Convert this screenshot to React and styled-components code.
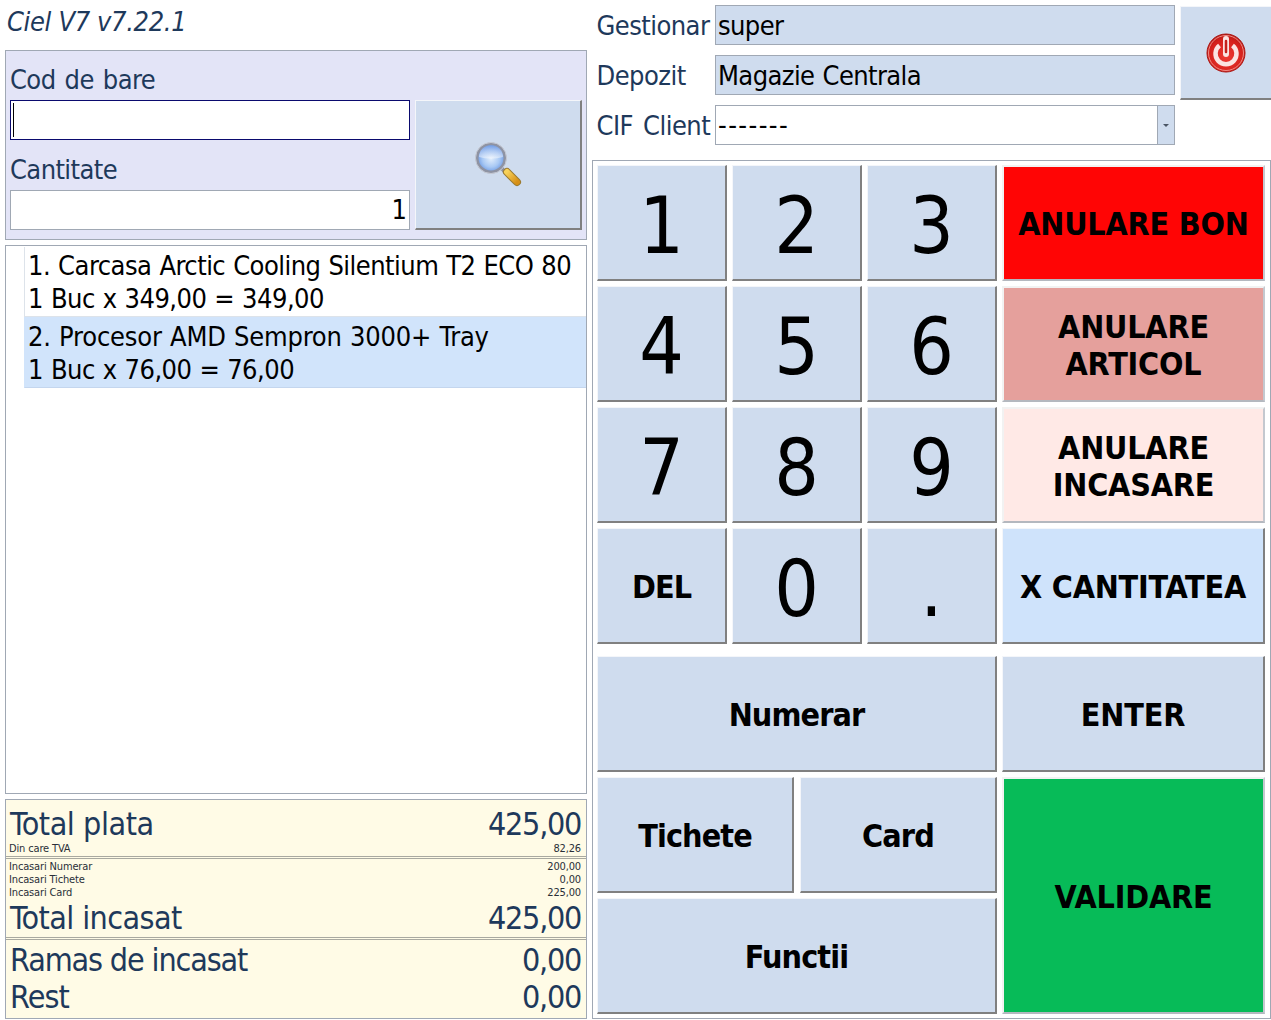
import React from "react";
import styled, { createGlobalStyle, css } from "styled-components";

const Global = createGlobalStyle`
  html, body { margin: 0; padding: 0; background: #fff; }
  body { font-family: "DejaVu Sans", "Liberation Sans", sans-serif; font-stretch: condensed; color: #000; }
`;

const ink = "#1e395b";
const line = "#a0a8b4";

const Page = styled.div`
  width: 1271px;
  height: 1020px;
  overflow: hidden;
  display: grid;
  grid-template-columns: 582px 679px;
  column-gap: 5px;
  padding-left: 5px;
  box-sizing: border-box;
`;
const LeftCol = styled.div`display: flex; flex-direction: column;`;
const RightCol = styled.div`display: flex; flex-direction: column;`;

const Title = styled.div`
  height: 50px;
  box-sizing: border-box;
  padding: 5px 0 0 2px;
  font-size: 27px;
  line-height: 34px;
  font-style: italic;
  color: ${ink};
  letter-spacing: -0.35px;
`;
const ScanPanel = styled.div`
  height: 190px;
  box-sizing: border-box;
  border: 1px solid ${line};
  background: #e3e4f7;
  padding: 10px 4px 9px 4px;
  display: grid;
  grid-template-columns: 400px 167px;
  column-gap: 5px;
`;
const ScanFields = styled.div`display: flex; flex-direction: column;`;
const FieldLabel = styled.div`
  height: 39px;
  font-size: 27px;
  line-height: 38px;
  color: ${ink};
  letter-spacing: -0.6px;
  word-spacing: 2px;
  white-space: nowrap;
`;
const Input = styled.div`
  height: 40px;
  box-sizing: border-box;
  background: #fff;
  border: 1px solid ${p => (p.$focus ? "#0a0a6e" : line)};
  font-size: 27px;
  line-height: 40px;
  padding-right: 2px;
  display: flex;
  align-items: center;
  justify-content: ${p => (p.$focus ? "flex-start" : "flex-end")};
`;
const Caret = styled.span`width: 1px; height: 34px; background: #000; margin-left: 2px;`;
const Spacer = styled.div`height: 11px;`;

const bevel = css`
  box-sizing: border-box;
  background: #cfdcee;
  border-style: solid;
  border-width: 1px 2px 2px 1px;
  border-color: #f4f6fa #808080 #808080 #f4f6fa;
`;
const IconButton = styled.div`
  ${bevel}
  display: flex;
  align-items: center;
  justify-content: center;
`;
const SearchButton = styled(IconButton)`
  height: 130px;
  margin-top: 39px;
`;

const List = styled.div`
  margin-top: 5px;
  height: 549px;
  box-sizing: border-box;
  border: 1px solid ${line};
  padding: 1px 0 0 18px;
  display: flex;
  flex-direction: column;
`;
const Item = styled.div`
  box-sizing: border-box;
  height: ${p => (p.$selected ? 71 : 70)}px;
  padding: ${p => (p.$selected ? 3 : 2)}px 0 0 3px;
  font-size: 27px;
  line-height: 33px;
  letter-spacing: -0.53px;
  word-spacing: 0.8px;
  white-space: nowrap;
  border-left: 1px solid ${p => (p.$selected ? "#d1e4fb" : "#dde3ea")};
  background: ${p => (p.$selected ? "#d1e4fb" : "#fff")};
  border-bottom: 1px solid ${p => (p.$selected ? "#c4d6ee" : "#dde3ea")};
`;
const WideLine = styled.span`letter-spacing: -0.2px;`;

const Totals = styled.div`
  margin-top: 5px;
  height: 220px;
  box-sizing: border-box;
  border: 1px solid ${line};
  background: #fffbe6;
  display: flex;
  flex-direction: column;
  color: ${ink};
`;
const Section = styled.div`
  box-sizing: border-box;
  height: ${p => p.$h}px;
  padding: ${p => p.$pad || "0"} 5px 0 4px;
  border-bottom: ${p => (p.$last ? "none" : "3px double #a9a9a0")};
`;
const BigRow = styled.div`
  display: flex;
  justify-content: space-between;
  font-size: 32px;
  line-height: ${p => p.$lh || 37}px;
  height: ${p => p.$lh || 37}px;
  white-space: nowrap;
`;
const BigLabel = styled.span`letter-spacing: ${p => p.$ls}px;`;
const BigValue = styled.span`letter-spacing: -1.3px;`;
const SmallRow = styled.div`
  display: flex;
  justify-content: space-between;
  margin-left: -1px;
  font-size: 11px;
  line-height: 13px;
  height: 13px;
  letter-spacing: -0.15px;
  color: #2a2f38;
`;

const TopArea = styled.div`
  height: 160px;
  box-sizing: border-box;
  padding: 5px 0 0 5px;
  display: grid;
  grid-template-columns: 578px 91px;
  column-gap: 5px;
  align-items: start;
`;
const InfoRow = styled.div`
  display: grid;
  grid-template-columns: 118px 460px;
  align-items: center;
  height: 40px;
  margin-bottom: 10px;
`;
const InfoLabel = styled.div`
  height: 40px;
  margin-left: -0.5px;
  font-size: 27px;
  line-height: 42px;
  color: ${ink};
  letter-spacing: -0.55px;
  word-spacing: 3px;
  white-space: nowrap;
`;
const ReadOnly = styled.div`
  height: 40px;
  box-sizing: border-box;
  background: #cfdcee;
  border: 1px solid ${line};
  padding-left: 2px;
  font-size: 27px;
  line-height: 40px;
  letter-spacing: -0.6px;
  word-spacing: 1px;
`;
const Combo = styled.div`
  height: 40px;
  box-sizing: border-box;
  background: #fff;
  border: 1px solid ${line};
  padding-left: 2px;
  display: flex;
  justify-content: space-between;
  font-size: 27px;
  line-height: 38px;
`;
const ComboValue = styled.span`letter-spacing: 1.4px;`;
const ComboArrow = styled.div`
  width: 16px;
  height: 100%;
  border-left: 1px solid ${line};
  background: #cfdcee;
  display: flex;
  align-items: center;
  justify-content: center;
  &::after {
    content: "";
    border-left: 3px solid transparent;
    border-right: 3px solid transparent;
    border-top: 3px solid #4a5564;
  }
`;
const PowerButton = styled(IconButton)`
  height: 94px;
  margin-top: 1px;
  border-right: none;
`;

const Pad = styled.div`
  height: 859px;
  box-sizing: border-box;
  border: 1px solid ${line};
  padding: 4px;
  display: flex;
  flex-direction: column;
  row-gap: 12px;
`;
const PadGrid = styled.div`
  display: grid;
  grid-template-columns: 130px 130px 130px 263px;
  grid-auto-rows: 116px;
  gap: 5px;
`;
const Key = styled.div`
  ${bevel}
  display: flex;
  align-items: center;
  justify-content: center;
  text-align: center;
  color: #000;
  white-space: nowrap;
  font-weight: ${p => (p.$digit ? 400 : 700)};
  font-size: ${p => (p.$digit ? "78px" : "32px")};
  line-height: ${p => (p.$digit ? "78px" : "37px")};
  padding-top: ${p => (p.$digit ? "7px" : "3px")};
  letter-spacing: ${p => (p.$digit ? "0" : p.$caps ? "-0.2px" : "-0.9px")};
  grid-column: ${p => (p.$span ? `span ${p.$span}` : "auto")};
  grid-row: ${p => (p.$rows ? `span ${p.$rows}` : "auto")};
  ${p => p.$tint && css`background: ${p.$tint};`}
  ${p => p.$color && css`
    background: ${p.$color};
    border-color: #f2f2f2 #c4c8cf #b4b8bf #f2f2f2;
    border-width: 2px;
  `}
`;
const KeySplit = styled.div`
  grid-column: span 3;
  display: grid;
  grid-template-columns: 197px 197px;
  column-gap: 6px;
`;

const Magnifier = () => (
  <svg width="48" height="48" viewBox="0 0 48 48">
    <defs>
      <radialGradient id="lens" cx="50%" cy="52%" r="55%">
        <stop offset="0" stopColor="#e2eefc" />
        <stop offset="0.55" stopColor="#a9c9f4" />
        <stop offset="1" stopColor="#5f8fe0" />
      </radialGradient>
      <linearGradient id="shine" x1="0" y1="0" x2="0" y2="1">
        <stop offset="0" stopColor="#6f9be6" stopOpacity="0.7" />
        <stop offset="1" stopColor="#ffffff" stopOpacity="0.5" />
      </linearGradient>
      <linearGradient id="handle" x1="0" y1="0" x2="1" y2="1">
        <stop offset="0" stopColor="#f8d25a" />
        <stop offset="1" stopColor="#d68f16" />
      </linearGradient>
    </defs>
    <path d="M26 28 L29 26 L33 30 L30 33Z" fill="#8d8f99" />
    <path d="M33 31 L43 41" stroke="#9a7a30" strokeWidth="8" strokeLinecap="round" />
    <path d="M33 31 L43 41" stroke="url(#handle)" strokeWidth="6" strokeLinecap="round" />
    <circle cx="17" cy="17" r="14" fill="url(#lens)" stroke="#8e93a3" strokeWidth="3" />
    <path d="M5 16 A12 12 0 0 1 29 16 Q17 19 5 16Z" fill="url(#shine)" />
    <circle cx="17" cy="17" r="15.5" fill="none" stroke="#c6cad4" strokeWidth="1" />
  </svg>
);

const Power = () => (
  <svg width="40" height="40" viewBox="0 0 40 40">
    <defs>
      <radialGradient id="red" cx="50%" cy="60%" r="65%">
        <stop offset="0" stopColor="#ee3a34" />
        <stop offset="0.7" stopColor="#d5211c" />
        <stop offset="1" stopColor="#a81410" />
      </radialGradient>
    </defs>
    <circle cx="20" cy="20" r="19" fill="url(#red)" stroke="#a81410" />
    <circle cx="20" cy="20" r="17.5" fill="none" stroke="#f08c86" strokeWidth="1" />
    <path d="M13.5 12.5 A10.5 10.5 0 1 0 26.5 12.5" fill="none" stroke="#fbe4e2" strokeWidth="4.5" />
    <path d="M20 6 V21" stroke="#fbe4e2" strokeWidth="6" strokeLinecap="round" />
    <path d="M20 8 V19" stroke="#c4211c" strokeWidth="2.5" strokeLinecap="round" />
  </svg>
);

export default function App() {
  return (
    <Page>
      <Global />
      <LeftCol>
        <Title>Ciel V7 v7.22.1</Title>
        <ScanPanel>
          <ScanFields>
            <FieldLabel>Cod de bare</FieldLabel>
            <Input $focus><Caret /></Input>
            <Spacer />
            <FieldLabel>Cantitate</FieldLabel>
            <Input>1</Input>
          </ScanFields>
          <div>
            <SearchButton><Magnifier /></SearchButton>
          </div>
        </ScanPanel>
        <List>
          <Item>1. Carcasa Arctic Cooling Silentium T2 ECO 80<br />1 Buc x 349,00 = 349,00</Item>
          <Item $selected><WideLine>2. Procesor AMD Sempron 3000+ Tray</WideLine><br />1 Buc x 76,00 = 76,00</Item>
        </List>
        <Totals>
          <Section $h={59} $pad="6px">
            <BigRow $lh={36}><BigLabel $ls={-0.45}>Total plata</BigLabel><BigValue>425,00</BigValue></BigRow>
            <SmallRow><span>Din care TVA</span><span>82,26</span></SmallRow>
          </Section>
          <Section $h={81} $pad="1px">
            <SmallRow><span>Incasari Numerar</span><span>200,00</span></SmallRow>
            <SmallRow><span>Incasari Tichete</span><span>0,00</span></SmallRow>
            <SmallRow><span>Incasari Card</span><span>225,00</span></SmallRow>
            <BigRow $lh={38}><BigLabel $ls={-0.6}>Total incasat</BigLabel><BigValue>425,00</BigValue></BigRow>
          </Section>
          <Section $h={78} $pad="2px" $last>
            <BigRow><BigLabel $ls={-1.15}>Ramas de incasat</BigLabel><BigValue>0,00</BigValue></BigRow>
            <BigRow><BigLabel $ls={-0.9}>Rest</BigLabel><BigValue>0,00</BigValue></BigRow>
          </Section>
        </Totals>
      </LeftCol>
      <RightCol>
        <TopArea>
          <div>
            <InfoRow><InfoLabel>Gestionar</InfoLabel><ReadOnly>super</ReadOnly></InfoRow>
            <InfoRow><InfoLabel>Depozit</InfoLabel><ReadOnly>Magazie Centrala</ReadOnly></InfoRow>
            <InfoRow><InfoLabel>CIF Client</InfoLabel><Combo><ComboValue>-------</ComboValue><ComboArrow /></Combo></InfoRow>
          </div>
          <PowerButton><Power /></PowerButton>
        </TopArea>
        <Pad>
          <PadGrid>
            <Key $digit>1</Key><Key $digit>2</Key><Key $digit>3</Key>
            <Key $caps $color="#ff0505">ANULARE BON</Key>
            <Key $digit>4</Key><Key $digit>5</Key><Key $digit>6</Key>
            <Key $caps $color="#e5a09c">ANULARE<br />ARTICOL</Key>
            <Key $digit>7</Key><Key $digit>8</Key><Key $digit>9</Key>
            <Key $caps $color="#ffe9e6">ANULARE<br />INCASARE</Key>
            <Key>DEL</Key><Key $digit>0</Key><Key $digit>.</Key>
            <Key $caps $tint="#cfe3fb">X CANTITATEA</Key>
          </PadGrid>
          <PadGrid>
            <Key $span={3}>Numerar</Key>
            <Key $caps>ENTER</Key>
            <KeySplit><Key>Tichete</Key><Key>Card</Key></KeySplit>
            <Key $caps $color="#07bb58" $rows={2}>VALIDARE</Key>
            <Key $span={3}>Functii</Key>
          </PadGrid>
        </Pad>
      </RightCol>
    </Page>
  );
}
